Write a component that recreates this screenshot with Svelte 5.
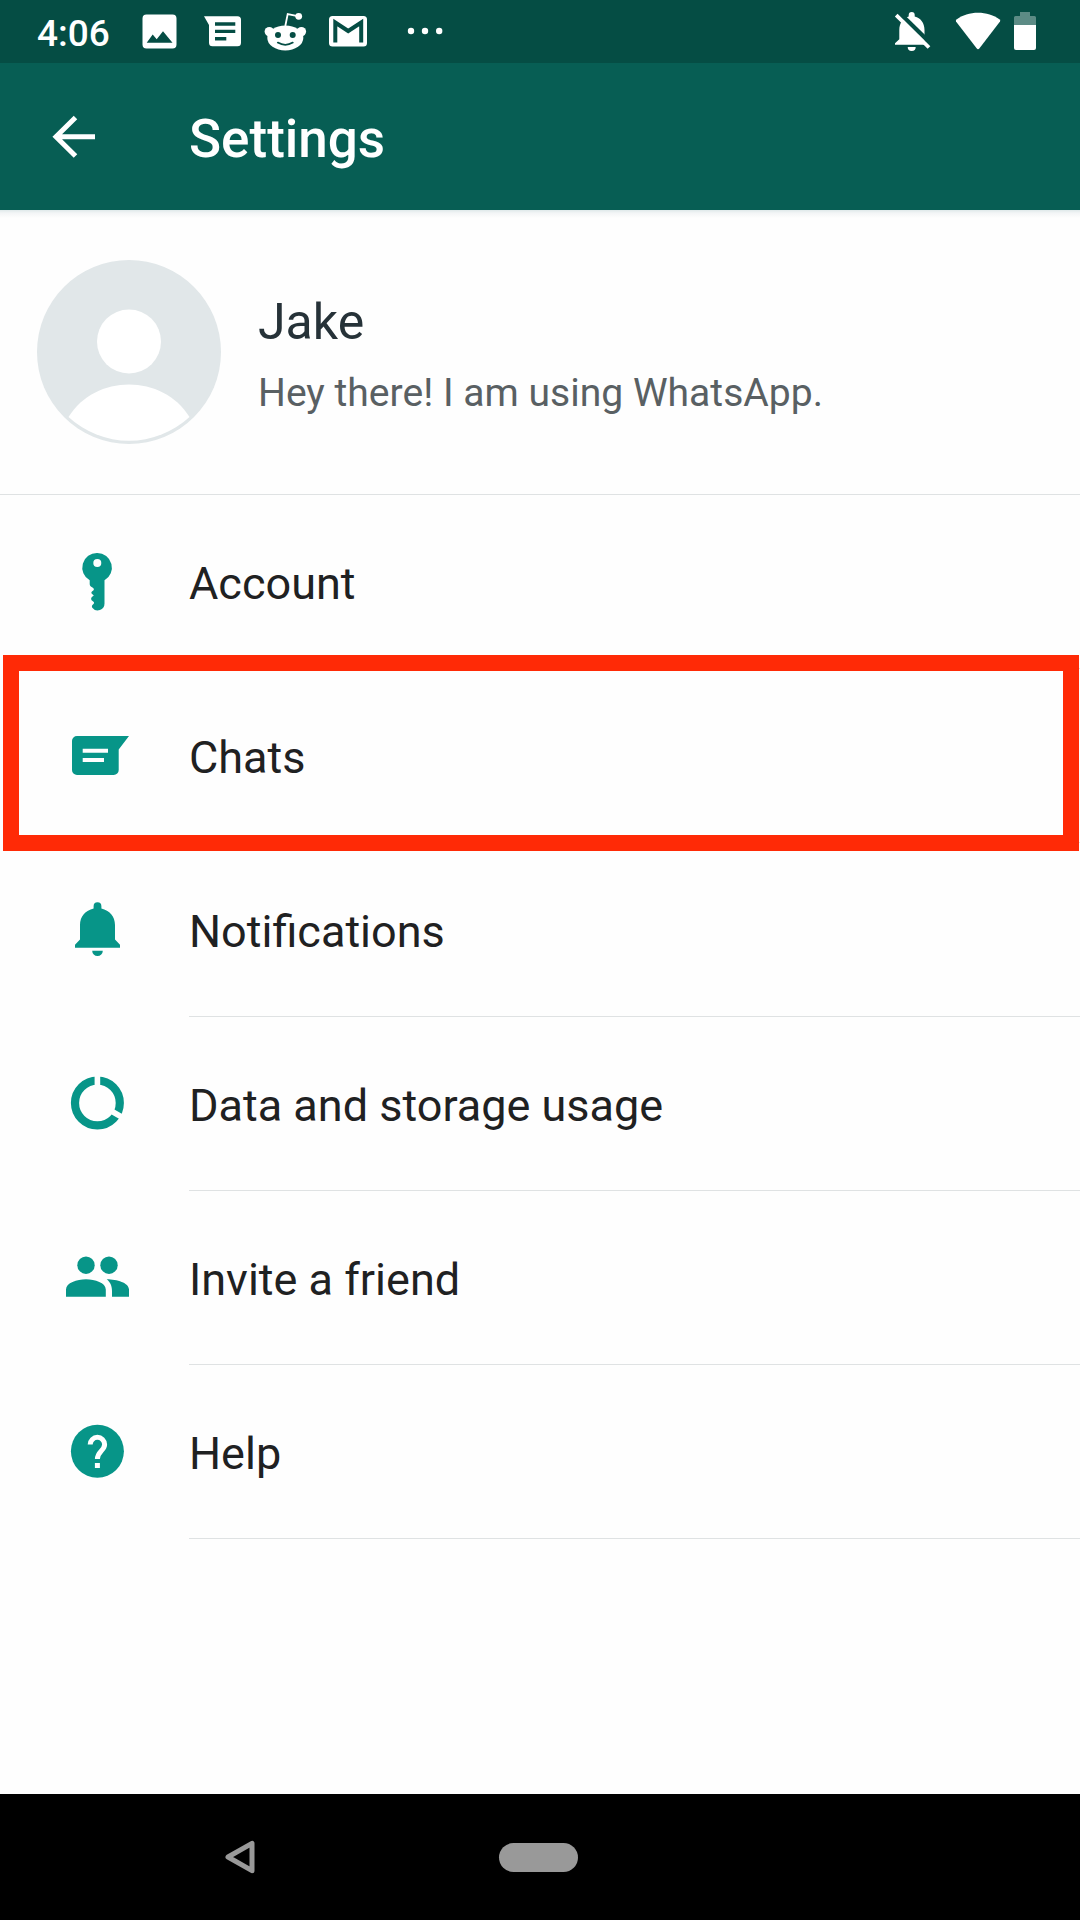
<script>
  const items = [
    { id: 'account', label: 'Account' },
    { id: 'chats', label: 'Chats' },
    { id: 'notifications', label: 'Notifications' },
    { id: 'data', label: 'Data and storage usage' },
    { id: 'invite', label: 'Invite a friend' },
    { id: 'help', label: 'Help' },
  ];

  let highlighted = $state('chats');
</script>

<div class="screen">
  <div class="status-bar">
    <span class="clock">4:06</span>
    <div class="notifs">
      <svg width="44" height="63" viewBox="0 0 44 63">
        <path fill-rule="evenodd" d="M9.5 14.5h26a4 4 0 0 1 4 4v26a4 4 0 0 1-4 4h-26a4 4 0 0 1-4-4v-26a4 4 0 0 1 4-4zM9.7 42.7h25.8L26 31.2l-6.3 8-4-4.6z" />
      </svg>
      <svg width="44" height="63" viewBox="0 0 44 63">
        <path fill-rule="evenodd" d="M4 16.3h33.5a3.5 3.5 0 0 1 3.5 3.5v23a3.5 3.5 0 0 1-3.5 3.5h-25a3.5 3.5 0 0 1-3.5-3.5V25zM15 22.3v3.4h20.3v-3.4zM15 29.7v3.4h20.3v-3.4zM15 37.1v3.4h11.3v-3.4z" />
      </svg>
      <svg width="44" height="63" viewBox="0 0 44 63">
        <path class="antenna" d="M22.3 26l2.4-12 10 2.2" />
        <circle cx="35.7" cy="16.3" r="3.4" />
        <circle cx="6.3" cy="31.6" r="4.7" />
        <circle cx="38.4" cy="31.6" r="4.7" />
        <ellipse cx="22.3" cy="38" rx="18" ry="12.4" />
        <circle class="cut" cx="15" cy="35" r="3" />
        <circle class="cut" cx="29.7" cy="35" r="3" />
        <path class="smile" d="M14.8 42.6q7.5 4.6 15 0" />
      </svg>
      <svg width="44" height="63" viewBox="0 0 44 63">
        <rect x="3" y="16" width="38" height="30.5" rx="3.5" />
        <path class="flap" d="M9.3 42.5V22.5L22.2 31 35.200 22.5V42.5" />
      </svg>
      <svg width="59" height="63" viewBox="0 0 59 63">
        <circle cx="22" cy="31" r="3.2" />
        <circle cx="36" cy="31" r="3.2" />
        <circle cx="50.2" cy="31" r="3.2" />
      </svg>
    </div>
    <div class="system">
      <svg width="52" height="63" viewBox="0 0 52 63">
        <path d="M23.7 12a3 3 0 0 1 3 3v1.5c6 1.5 9.8 6.5 9.8 13.5v12l3 2.7H7v-1.5l4.3-4V30c0-7 3.7-12 9.4-13.5V15a3 3 0 0 1 3-3zM19.7 47h8a4 4 0 0 1-8 0z" />
        <path class="gap" d="M11 12.500L44.3 45.2" />
        <path class="slash" d="M8.2 15.200L41 47.5" />
      </svg>
      <svg width="50" height="63" viewBox="0 0 50 63">
        <path d="M4 21.5Q3.5 20.5 4.5 19.6C16 10.5 36 10.5 47.7 19.6Q48.7 20.5 48 21.5L27.5 48.3Q26 50 24.6 48.3z" />
      </svg>
      <svg width="22" height="63" viewBox="0 0 22 63">
        <path opacity="0.35" d="M6 12h10v4h4.5a1.5 1.5 0 0 1 1.5 1.5V25H0v-7.5A1.5 1.5 0 0 1 1.5 16H6z" />
        <path d="M0 25h22v23a2 2 0 0 1-2 2H2a2 2 0 0 1-2-2z" />
      </svg>
    </div>
  </div>

  <header>
    <svg class="back" width="44" height="44" viewBox="0 0 44 44">
      <path d="M23.5 2.500L4 21.700 23.500 41M4.500 21.700H43" />
    </svg>
    <h1>Settings</h1>
  </header>

  <section class="profile">
    <svg class="avatar" width="184" height="184" viewBox="0 0 184 184">
      <circle cx="92" cy="92" r="92" fill="#e1e7e9" />
      <circle cx="92" cy="81.5" r="32" fill="#fff" />
      <path d="M31.5 157C58 113.5 126 113.5 152.5 157A89 89 0 0 1 31.5 157z" fill="#fff" />
    </svg>
    <div class="who">
      <div class="name">Jake</div>
      <div class="about">Hey there! I am using WhatsApp.</div>
    </div>
  </section>

  <ul class="menu">
    {#each items as item (item.id)}
    <li class:highlighted={highlighted === item.id}>
      <svg class="icon" width="72" height="74" viewBox="0 0 72 74">
        {#if item.id === 'account'}
        <path fill-rule="evenodd" d="M36.3 8a14.6 14.6 0 0 1 7.2 27.3V58.5a6.8 6.8 0 0 1-12.2 4.2C30.5 61.5 31 60 32.2 59.2 33.4 58.3 33.4 57.3 32.2 56.5L30.6 55.2C29.8 54 30 52.8 31.2 51.8L32.8 50.5 30.6 48.5C30 47.3 30.6 46.4 32.3 45.4 33.3 44.5 33 43.5 31.5 42.5 29.5 41.5 28.7 40.5 28.7 39V35.3A14.6 14.6 0 0 1 36.3 8zM36.3 14a4 4 0 1 0 0 8 4 4 0 0 0 0-8z" />
        {:else if item.id === 'chats'}
        <path fill-rule="evenodd" d="M16 17h52L57.7 30.5V51a5 5 0 0 1-5 5H16a5 5 0 0 1-5-5V22a5 5 0 0 1 5-5zM21.7 29.7v4H47v-4zM21.7 39v4H43v-4z" />
        {:else if item.id === 'notifications'}
        <path d="M36.5 9.3a3.9 3.9 0 0 1 3.900 3.9v2.2C48.5 17.5 54 23 54 32v14.5l5 5.3v2.9H14v-2.9l5-5.3V32c0-9 5.5-14.5 13.6-16.6v-2.2a3.9 3.9 0 0 1 3.900-3.900zM31.2 57.7h10.6a5.3 5.3 0 0 1-10.6 0z" />
        {:else if item.id === 'data'}
        <circle class="ring" cx="36.4" cy="36" r="22.4" />
        <path class="ring-gap" d="M36.4 36V6M36.4 36L62.4 51" />
        {:else if item.id === 'invite'}
        <circle cx="25" cy="24.2" r="8.7" />
        <circle cx="48" cy="24.2" r="8.7" />
        <path d="M5 55.7V48.5C5 42 16 38.3 25 38.3S44.8 42 44.8 48.5v7.2zM45.7 38.3C56 38.3 68 42 68 48.5v7.2H51V50C51 44.5 49 41 45.7 38.3z" />
        {:else}
        <circle cx="36.4" cy="36.3" r="26.5" />
        <path class="mark" d="M29.2 29.5a7.2 7.2 0 1 1 14.4 0C43.6 35.5 36.4 36.5 36.4 44" />
        <rect class="dot" x="33.9" y="48" width="5" height="5" />
        {/if}
      </svg>
      <span class="label">{item.label}</span>
    </li>
    {/each}
  </ul>

  <nav>
    <svg width="32" height="36" viewBox="0 0 32 36">
      <path d="M4 18L28 4.3v27.4z" />
    </svg>
    <div class="pill"></div>
  </nav>
</div>

<style>
  :global(body) {
    background: #fff;
  }

  .screen {
    display: flex;
    flex-direction: column;
    width: 1080px;
    height: 1920px;
    overflow: hidden;
    background: #fefefe;
    font-family: Roboto, sans-serif;
    color: #1f2122;
  }

  svg {
    display: block;
    flex: none;
  }

  .status-bar {
    display: flex;
    align-items: center;
    height: 63px;
    padding: 0 44px 0 37px;
    background: #054d44;
    color: #fff;
    fill: #fff;
  }

  .clock {
    width: 100px;
    font-size: 37px;
    font-weight: 500;
    line-height: 63px;
    padding-top: 3px;
  }

  .notifs {
    display: flex;
    gap: 19px;
  }

  .system {
    display: flex;
    gap: 12px;
    margin-left: auto;
  }

  .antenna {
    fill: none;
    stroke: #fff;
    stroke-width: 1.8;
  }

  .cut {
    fill: #054d44;
  }

  .smile {
    fill: none;
    stroke: #054d44;
    stroke-width: 1.8;
    stroke-linecap: round;
  }

  .flap {
    fill: none;
    stroke: #054d44;
    stroke-width: 4;
  }

  .gap {
    stroke: #054d44;
    stroke-width: 4.5;
  }

  .slash {
    stroke: #fff;
    stroke-width: 3.8;
  }

  header {
    display: flex;
    align-items: center;
    height: 147px;
    padding-left: 52px;
    background: #075e54;
    color: #fff;
  }

  .back {
    fill: none;
    stroke: #fff;
    stroke-width: 5;
  }

  h1 {
    margin: 5px 0 0 93px;
    font-size: 53px;
    font-weight: 500;
    line-height: 64px;
  }

  .profile {
    display: flex;
    align-items: center;
    box-sizing: border-box;
    height: 285px;
    padding-left: 37px;
    background: linear-gradient(#dfe9ea, #f3f5f6 3px, #fefefe 8px);
    border-bottom: 1px solid #dfe2e3;
  }

  .who {
    margin: 5px 0 0 37px;
  }

  .name {
    font-size: 50px;
    line-height: 60px;
    color: #263238;
  }

  .about {
    margin-top: 16px;
    font-size: 39.1px;
    line-height: 50px;
    color: #596063;
  }

  .menu {
    flex: 1;
    margin: 0;
    padding: 0;
    list-style: none;
  }

  li {
    position: relative;
    display: flex;
    align-items: center;
    height: 174px;
    padding-left: 61px;
  }

  .icon {
    fill: #079588;
  }

  .label {
    flex: 1;
    box-sizing: border-box;
    height: 174px;
    margin-left: 56px;
    padding-top: 4px;
    border-bottom: 1px solid #dfe2e3;
    font-size: 45px;
    line-height: 169px;
  }

  /* frame sits over the neighbouring rows */
  .highlighted::after {
    content: '';
    position: absolute;
    z-index: 1;
    top: -14px;
    right: 1px;
    bottom: -8px;
    left: 3px;
    border: 16px solid #ff2a06;
  }

  .ring {
    fill: none;
    stroke: #079588;
    stroke-width: 8.2;
  }

  .ring-gap {
    stroke: #fefefe;
    stroke-width: 5.6;
  }

  .mark {
    fill: none;
    stroke: #fff;
    stroke-width: 5;
  }

  .dot {
    fill: #fff;
  }

  nav {
    display: flex;
    align-items: center;
    height: 126px;
    padding-left: 224px;
    background: #000;
  }

  nav svg {
    fill: none;
    stroke: #999;
    stroke-width: 5;
    stroke-linejoin: round;
  }

  .pill {
    width: 79px;
    height: 29px;
    margin-left: 243px;
    border-radius: 15px;
    background: #999;
  }
</style>
